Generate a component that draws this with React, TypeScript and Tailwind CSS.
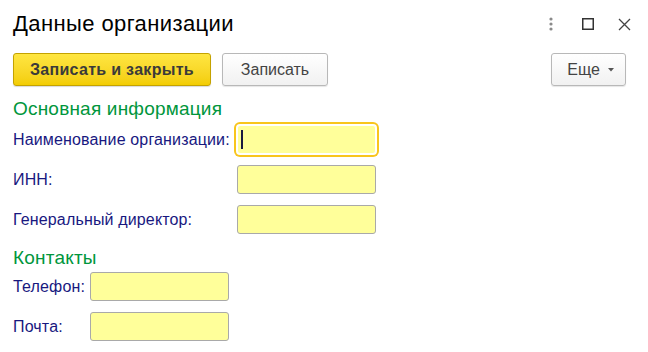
import { useState } from 'react';

const font = { fontFamily: '"Liberation Sans", Arial, sans-serif' };

function TitleIcons() {
  return (
    <div className="flex items-center">
      <svg width="6" height="14" viewBox="0 0 6 14" className="mr-[28px]">
        <circle cx="3" cy="2" r="1.6" fill="#8a8a8a" />
        <circle cx="3" cy="7" r="1.6" fill="#8a8a8a" />
        <circle cx="3" cy="12" r="1.6" fill="#8a8a8a" />
      </svg>
      <svg width="12" height="12" viewBox="0 0 12 12" className="mr-[24px]">
        <rect x="0.75" y="0.75" width="10.5" height="10.5" fill="none" stroke="#333" strokeWidth="1.5" />
      </svg>
      <svg width="13" height="13" viewBox="0 0 13 13">
        <path d="M1 1 L12 12 M12 1 L1 12" stroke="#444" strokeWidth="1.3" />
      </svg>
    </div>
  );
}

function Field({
  label,
  labelWidth,
  focused = false,
}: {
  label: string;
  labelWidth: string;
  focused?: boolean;
}) {
  const [value, setValue] = useState('');
  return (
    <div className="flex h-[29px] items-center">
      <div className={`${labelWidth} shrink-0 text-[16px] tracking-[0.15px] text-[#18187f]`}>{label}</div>
      <div
        className={
          focused
            ? 'relative h-[29px] w-[139px] rounded-[3px] border border-white bg-[#ffff9a] shadow-[0_0_0_1px_#fff,0_0_0_3px_#f8c51c]'
            : 'h-[29px] w-[139px] rounded-[3px] border border-[#a9a9a9] bg-[#ffff9a]'
        }
      >
        <input
          value={value}
          onChange={(e) => setValue(e.target.value)}
          className="h-full w-full bg-transparent px-[4px] text-[15px] outline-none"
          style={font}
        />
        {focused && <span className="absolute left-[3px] top-[4px] h-[19px] w-[2px] bg-[#1a1a40]" />}
      </div>
    </div>
  );
}

export default function App() {
  return (
    <div className="h-[352px] w-[648px] bg-white pl-[13px] pr-[17px]" style={font}>
      <div className="flex items-center justify-between pt-[11px]">
        <h1 className="text-[22px] leading-[26px] tracking-[0.4px] text-black">Данные организации</h1>
        <TitleIcons />
      </div>

      <div className="mt-[16px] flex h-[33px] items-stretch">
        <button className="w-[198px] rounded-[3px] border border-[#c4a200] bg-gradient-to-b from-[#ffe640] to-[#f3cd00] text-[16px] font-bold tracking-[0.3px] text-[#3a3a3a] shadow-[0_1px_1px_rgba(0,0,0,0.15)]">
          Записать и закрыть
        </button>
        <button className="ml-[11px] w-[106px] rounded-[3px] border border-[#b8b8b8] bg-gradient-to-b from-white to-[#f1f1f1] text-[16px] text-[#444] shadow-[0_1px_1px_rgba(0,0,0,0.1)]">
          Записать
        </button>
        <button className="ml-auto mr-[5px] flex w-[75px] items-center justify-center gap-[8px] rounded-[3px] border border-[#b8b8b8] bg-gradient-to-b from-white to-[#f1f1f1] pl-[4px] text-[16px] text-[#444] shadow-[0_1px_1px_rgba(0,0,0,0.1)]">
          Еще
          <svg width="6" height="4" viewBox="0 0 6 4">
            <path d="M0 0 H6 L3 3.5 Z" fill="#555" />
          </svg>
        </button>
      </div>

      <div className="mt-[11px] text-[19px] leading-[23px] tracking-[0.2px] text-[#00963c]">Основная информация</div>
      <div className="mt-[5px] flex flex-col gap-[11px]">
        <Field label="Наименование организации:" labelWidth="w-[224px]" focused />
        <Field label="ИНН:" labelWidth="w-[224px]" />
        <Field label="Генеральный директор:" labelWidth="w-[224px]" />
      </div>

      <div className="mt-[12px] text-[19px] leading-[23px] tracking-[0.2px] text-[#00963c]">Контакты</div>
      <div className="mt-[3px] flex flex-col gap-[11px]">
        <Field label="Телефон:" labelWidth="w-[77px]" />
        <Field label="Почта:" labelWidth="w-[77px]" />
      </div>
    </div>
  );
}
